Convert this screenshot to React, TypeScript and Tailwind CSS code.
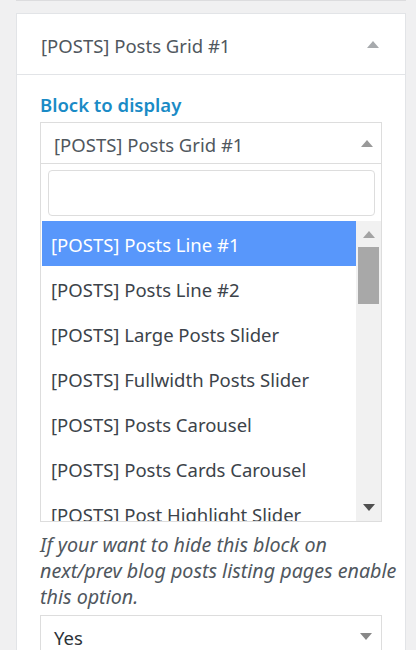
import React from "react";

const options = [
  "[POSTS] Posts Line #1",
  "[POSTS] Posts Line #2",
  "[POSTS] Large Posts Slider",
  "[POSTS] Fullwidth Posts Slider",
  "[POSTS] Posts Carousel",
  "[POSTS] Posts Cards Carousel",
  "[POSTS] Post Highlight Slider",
];

function Tri({ up, color }: { up?: boolean; color: string }) {
  return (
    <svg width="12" height="7" viewBox="0 0 12 7" className="block">
      {up ? (
        <polygon points="0,7 12,7 6,0" fill={color} />
      ) : (
        <polygon points="0,0 12,0 6,7" fill={color} />
      )}
    </svg>
  );
}

export default function App() {
  return (
    <div className="h-[650px] w-[416px] overflow-hidden bg-[#f0f0f1] font-['Noto_Sans',sans-serif] text-[18.5px]">
      <div className="ml-4 mr-[10px] h-px bg-[#dcdcde]" />
      <div className="ml-4 mr-[10px] mt-3 border border-[#e2e4e7] bg-white">
        <div className="flex h-[61px] items-center justify-between border-b border-[#e2e4e7] pl-6 pr-[26px]">
          <span className="pt-[3px] text-[#50575e] leading-[26px]">[POSTS] Posts Grid #1</span>
          <Tri up color="#a7aaad" />
        </div>
        <div className="px-[23px] pt-[17px]">
          <div className="leading-[26px] font-semibold text-[#1a8bc6]">Block to display</div>
          <div className="relative mt-[4px]">
            <div className="flex h-[42px] items-center justify-between border border-[#dddddd] pl-[13px] pr-[8px]">
              <span className="pt-[3px] text-[#50575e] leading-[26px]">[POSTS] Posts Grid #1</span>
              <Tri up color="#999999" />
            </div>
            <div className="absolute left-0 right-0 top-full z-10 border-x border-b border-[#dddddd] bg-white">
              <div className="ml-[7px] mr-[6px] mt-[6px] h-[46px] rounded-[4px] border border-[#dddddd]" />
              <div className="mt-[5px] flex h-[300px] pl-px">
                <div className="flex-1 overflow-hidden">
                  {options.map((o, i) => (
                    <div
                      key={o}
                      className={
                        i === 0
                          ? "flex h-[45px] shrink-0 items-center whitespace-nowrap bg-[#5897fb] pl-[9px] pt-[3px] text-white"
                          : "flex h-[45px] shrink-0 items-center whitespace-nowrap pl-[9px] pt-[3px] text-[#3c434a]"
                      }
                    >
                      {o}
                    </div>
                  ))}
                </div>
                <div className="flex w-[25px] flex-col items-center bg-[#f1f1f1]">
                  <div className="mt-[10px]">
                    <Tri up color="#a3a3a3" />
                  </div>
                  <div className="mt-[9px] h-[57px] w-[21px] bg-[#a8a8a8]" />
                  <div className="flex-1" />
                  <div className="mb-[10px]">
                    <Tri color="#505050" />
                  </div>
                </div>
              </div>
            </div>
          </div>
          <div className="h-[368px]" />
          <p className="whitespace-nowrap text-[19.7px] italic leading-[26px] text-[#50575e]">
            If your want to hide this block on
            <br />
            next/prev blog posts listing pages enable
            <br />
            this option.
          </p>
          <div className="mt-[5px] flex h-[42px] items-center justify-between border border-[#dddddd] pl-[13px] pr-[9px]">
            <span className="pt-[3px] text-[#2c3338] leading-[26px]">Yes</span>
            <Tri color="#888888" />
          </div>
          <div className="h-10" />
        </div>
      </div>
    </div>
  );
}
